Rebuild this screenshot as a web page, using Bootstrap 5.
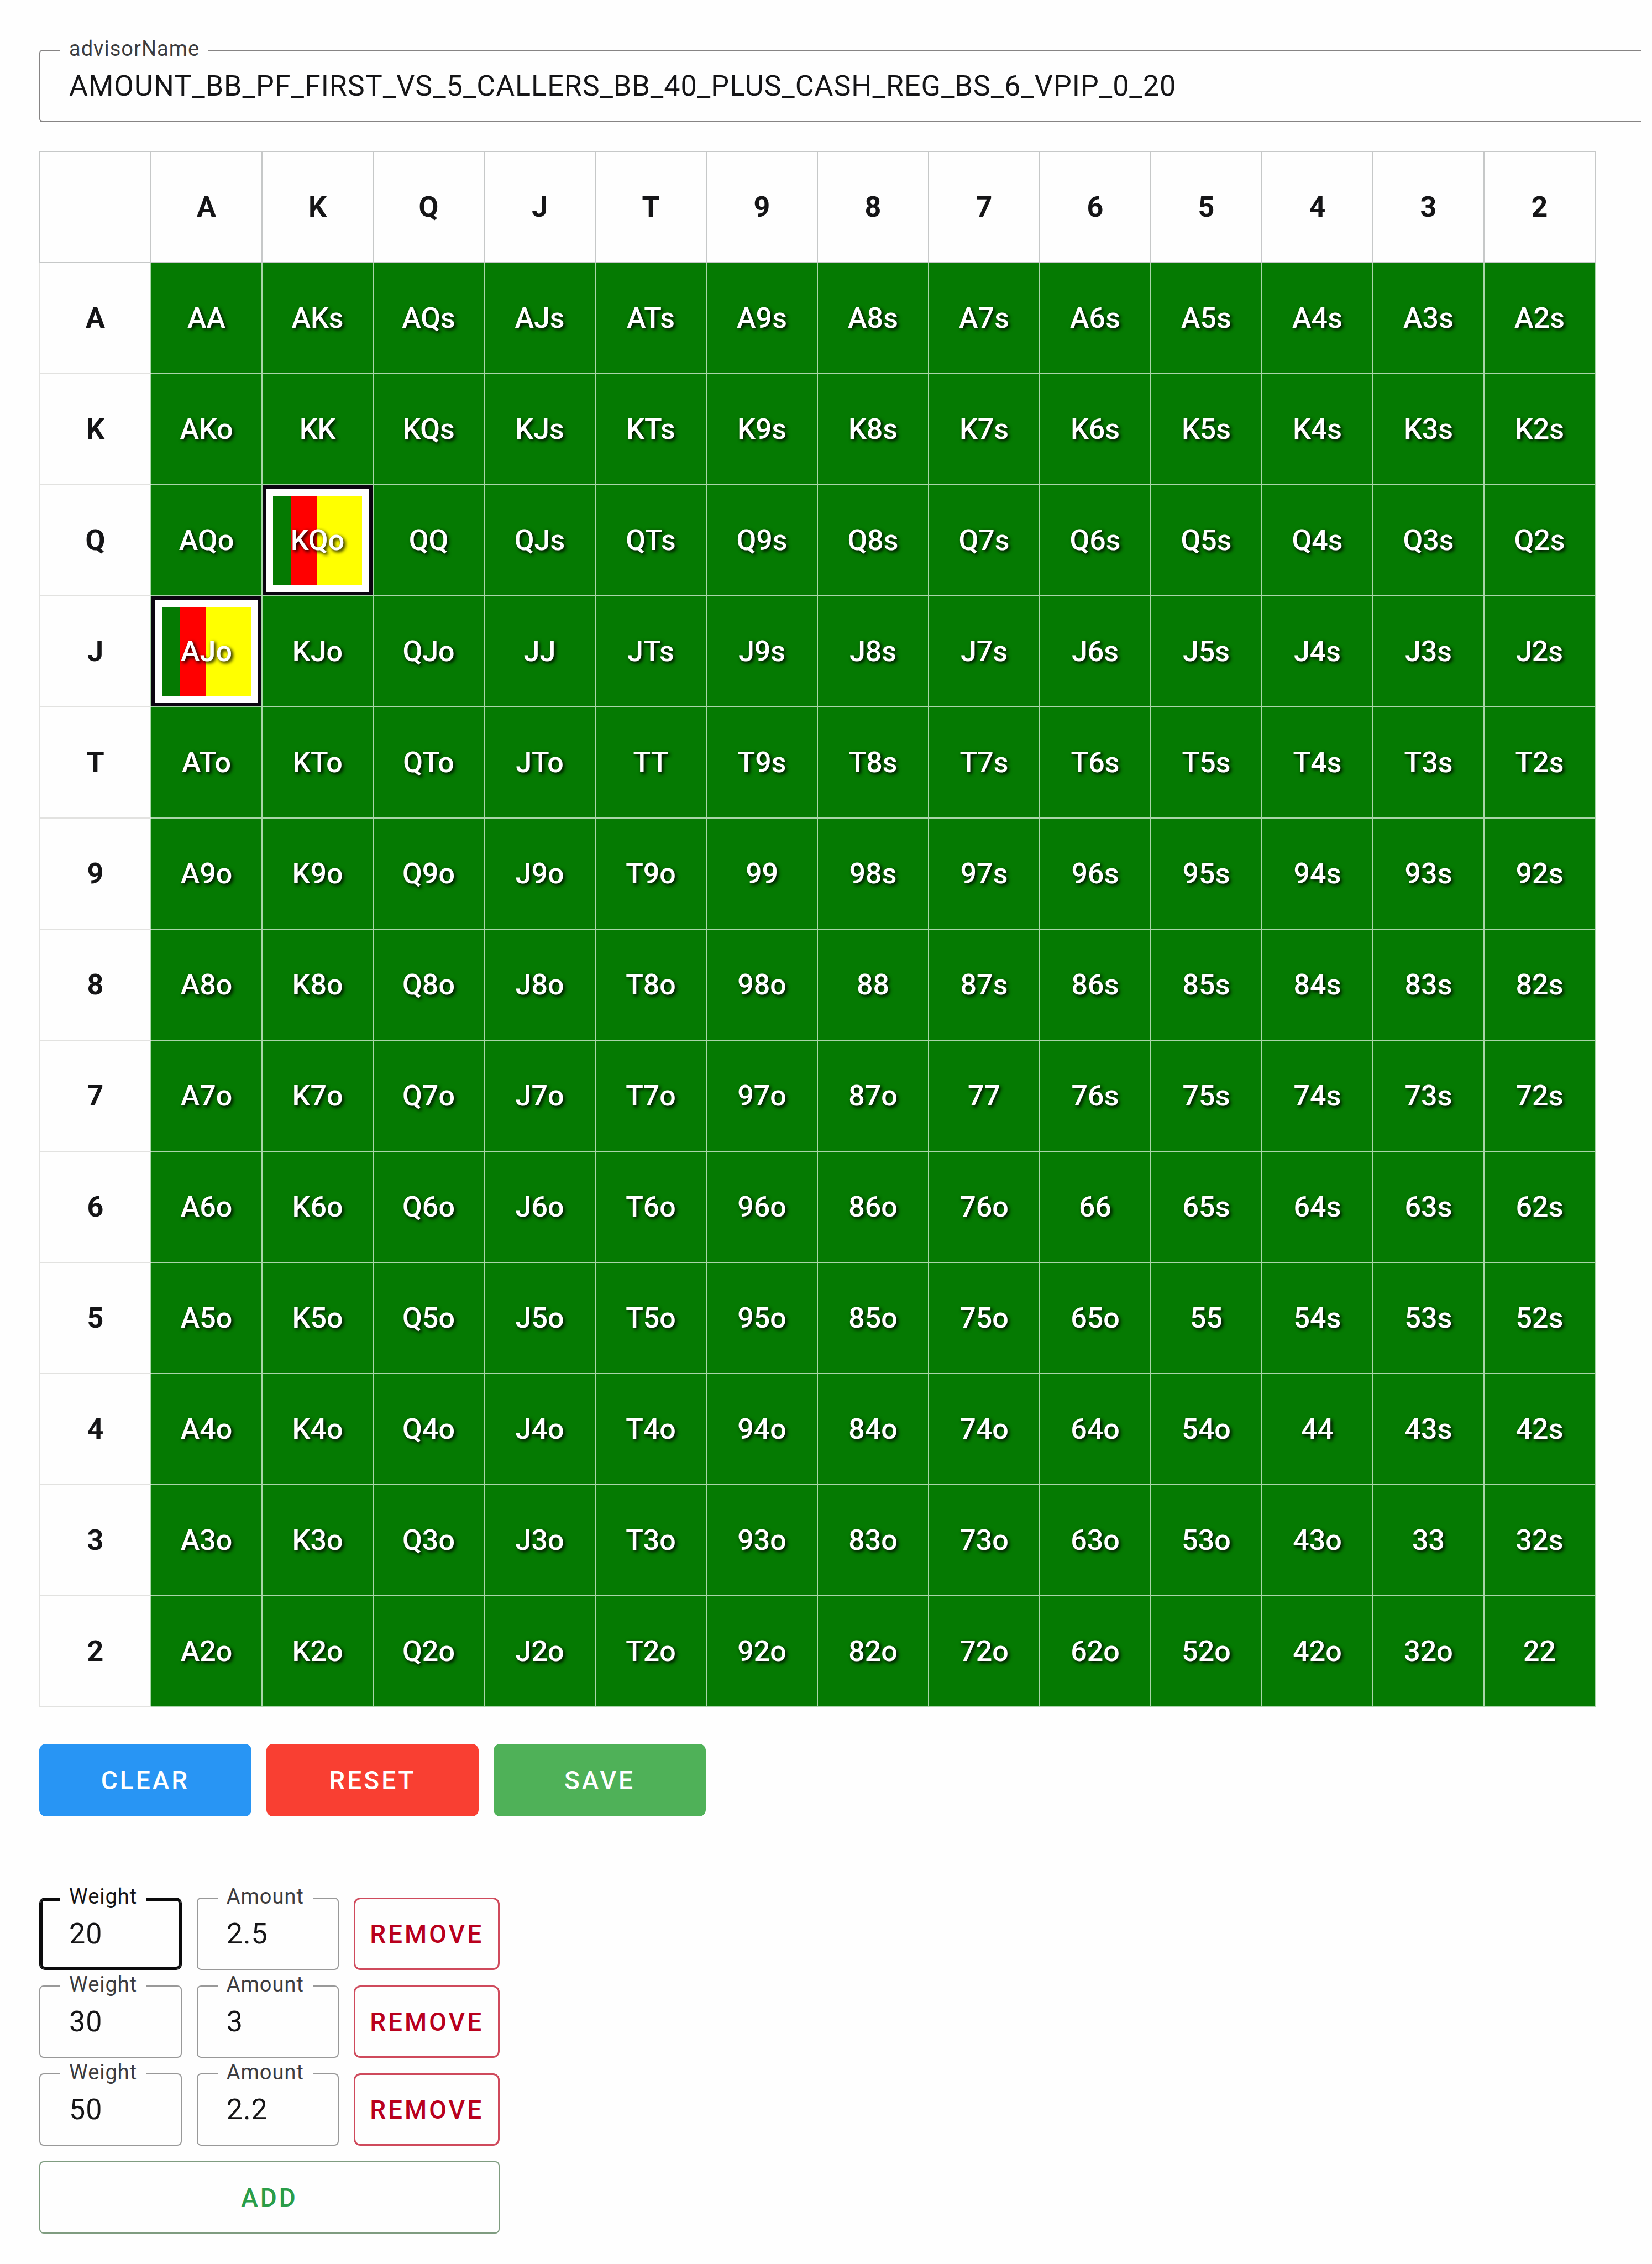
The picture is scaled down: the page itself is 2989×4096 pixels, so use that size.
<!DOCTYPE html>
<html lang="en">
<head>
<meta charset="utf-8">
<meta name="viewport" content="width=device-width, initial-scale=1">
<title>Advisor editor</title>
<link href="https://cdn.jsdelivr.net/npm/bootstrap@5.3.0/dist/css/bootstrap.min.css" rel="stylesheet">
<style>
  :root { --cell: 201px; --ctl: 131px; --ink: #151517; }
  body { font-family: Roboto, "Liberation Sans", sans-serif; background: #fefefe; color: var(--ink); }
  .page { padding: 90px 19px 48px 71px; }
  .gap-ctl { gap: 28px 27px; }

  /* outlined text fields */
  .field { flex: 1 1 0; min-width: 0; letter-spacing: 1px; }
  .field .form-control {
    height: var(--ctl); padding: 0 52px; font-size: 52px; line-height: 60px; letter-spacing: inherit;
    color: var(--ink); background: transparent; border: 2px solid #999; border-radius: 8px;
  }
  .field label {
    position: absolute; top: -24px; left: 38px; padding: 0 16px;
    font-size: 38px; line-height: 44px; color: #3c3c40; background: #fefefe;
  }
  .field.active .form-control { border-color: #0b0b0c; box-shadow: inset 0 0 0 4px #0b0b0c; border-radius: 10px; }
  .field.active label { color: var(--ink); }
  .field.open-end .form-control { border-color: #868484; border-right: 0; border-radius: 6px 0 0 6px; }

  /* hand matrix */
  .matrix { margin: 52px 0 66px; table-layout: fixed; width: calc(var(--cell) * 14); border-collapse: collapse; }
  .matrix th, .matrix td {
    width: var(--cell); height: var(--cell); padding: 0; text-align: center; vertical-align: middle;
    font-size: 52px; line-height: 60px; font-weight: 500; border: 2px solid #c6c8c8;
  }
  .matrix th { font-weight: 700; }
  .matrix tbody th { border-color: #e2e2e0; border-right-color: #a9d5a9; }
  .matrix td { background: #057a02; background-clip: padding-box; border-color: #a9d5a9; color: #fff; text-shadow: 3px 3px 6px #000; }
  .pick { height: 199px; border: 6px solid #0b0410; padding: 13px; background: #fff; }
  .mix { height: 100%; }

  /* buttons */
  .act {
    height: var(--ctl); padding: 0; font-size: 46px; line-height: 52px; font-weight: 500;
    letter-spacing: 4px; border-radius: 12px; border-width: 0;
  }
  .bar .act { width: 384px; color: #fff; }
  .bar { margin-bottom: 147px; }
  .act-clear { background: #2895f4; }
  .act-reset { background: #f93f32; }
  .act-save { background: #4fb158; }
  .act-remove { flex: 1 1 0; border: 3px solid #cf4a5c; color: #b9001c; }
  .act-add { border: 2px solid #7f9c80; color: #2a9d49; border-radius: 8px; }
  .weights { width: 833px; }
</style>
</head>
<body>
<main class="page">
  <div class="field open-end position-relative">
    <input class="form-control" id="advisorName" type="text" value="AMOUNT_BB_PF_FIRST_VS_5_CALLERS_BB_40_PLUS_CASH_REG_BS_6_VPIP_0_20">
    <label for="advisorName">advisorName</label>
  </div>

  <table class="matrix">
    <thead><tr id="head"><th></th></tr></thead>
    <tbody id="hands"></tbody>
  </table>

  <div class="bar d-flex gap-ctl">
    <button type="button" class="btn act act-clear">CLEAR</button>
    <button type="button" class="btn act act-reset">RESET</button>
    <button type="button" class="btn act act-save">SAVE</button>
  </div>

  <form class="weights d-flex flex-column gap-ctl">
    <div class="d-flex gap-ctl">
      <div class="field active position-relative"><input class="form-control" id="w1" type="text" value="20"><label for="w1">Weight</label></div>
      <div class="field position-relative"><input class="form-control" id="a1" type="text" value="2.5"><label for="a1">Amount</label></div>
      <button type="button" class="btn act act-remove">REMOVE</button>
    </div>
    <div class="d-flex gap-ctl">
      <div class="field position-relative"><input class="form-control" id="w2" type="text" value="30"><label for="w2">Weight</label></div>
      <div class="field position-relative"><input class="form-control" id="a2" type="text" value="3"><label for="a2">Amount</label></div>
      <button type="button" class="btn act act-remove">REMOVE</button>
    </div>
    <div class="d-flex gap-ctl">
      <div class="field position-relative"><input class="form-control" id="w3" type="text" value="50"><label for="w3">Weight</label></div>
      <div class="field position-relative"><input class="form-control" id="a3" type="text" value="2.2"><label for="a3">Amount</label></div>
      <button type="button" class="btn act act-remove">REMOVE</button>
    </div>
    <button type="button" class="btn act act-add">ADD</button>
  </form>
</main>
<script src="https://cdn.jsdelivr.net/npm/bootstrap@5.3.0/dist/js/bootstrap.bundle.min.js"></script>
<script>
  const ranks = [...'AKQJT98765432'];
  const picked = new Set(['KQo', 'AJo']);
  const mix = 'linear-gradient(90deg, #057a02 20%, #f00 20% 50%, #ff0 50%)';

  // Suited hands lie above the diagonal, offsuit hands below it.
  const handName = (r, c) =>
    r === c ? ranks[r] + ranks[c] : r < c ? ranks[r] + ranks[c] + 's' : ranks[c] + ranks[r] + 'o';

  const cell = name => picked.has(name)
    ? `<td><div class="pick"><div class="mix d-flex align-items-center justify-content-center" style="background:${mix}">${name}</div></div></td>`
    : `<td>${name}</td>`;

  document.getElementById('head').innerHTML += ranks.map(r => `<th scope="col">${r}</th>`).join('');
  document.getElementById('hands').innerHTML = ranks.map((rank, r) =>
    `<tr><th scope="row">${rank}</th>${ranks.map((_, c) => cell(handName(r, c))).join('')}</tr>`).join('');
</script>
</body>
</html>
